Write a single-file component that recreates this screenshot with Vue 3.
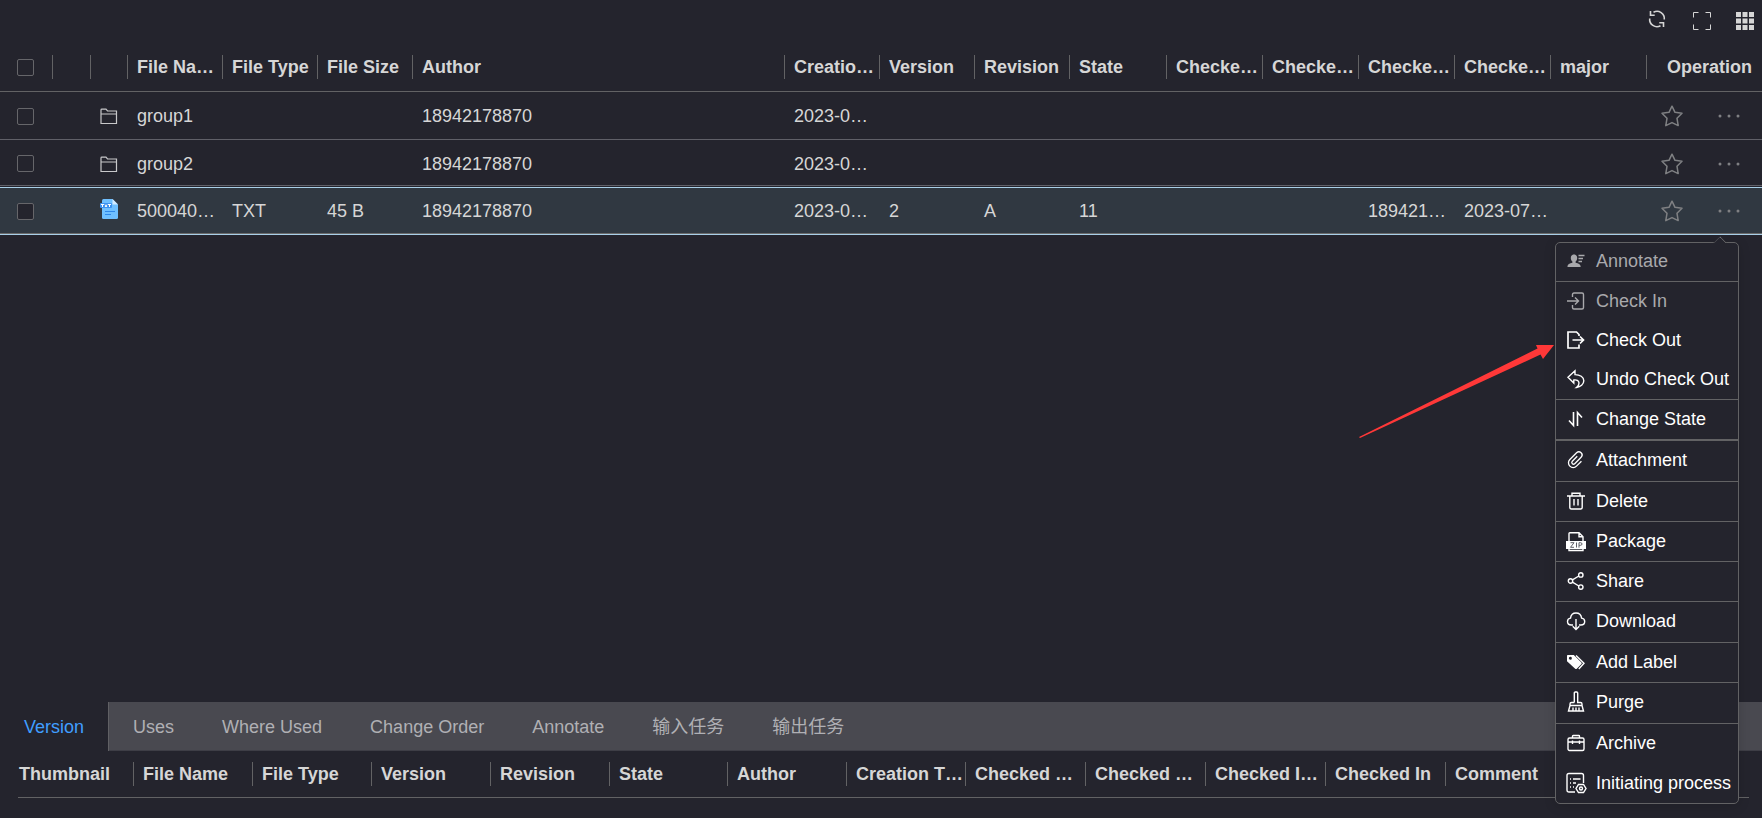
<script setup>
import { ref } from 'vue'

const columns = [
  { key: 'pin', label: '', cls: 'c-pin' },
  { key: 'icon', label: '', cls: 'c-icon' },
  { key: 'name', label: 'File Na…', cls: 'c-95' },
  { key: 'type', label: 'File Type', cls: 'c-95' },
  { key: 'size', label: 'File Size', cls: 'c-95' },
  { key: 'author', label: 'Author', cls: 'c-auto' },
  { key: 'created', label: 'Creatio…', cls: 'c-95' },
  { key: 'version', label: 'Version', cls: 'c-95' },
  { key: 'revision', label: 'Revision', cls: 'c-95' },
  { key: 'state', label: 'State', cls: 'c-97' },
  { key: 'ch1', label: 'Checke…', cls: 'c-96' },
  { key: 'ch2', label: 'Checke…', cls: 'c-96' },
  { key: 'ch3', label: 'Checke…', cls: 'c-96' },
  { key: 'ch4', label: 'Checke…', cls: 'c-96' },
  { key: 'major', label: 'major', cls: 'c-96' },
]

const rows = ref([
  { id: 1, kind: 'folder', name: 'group1', author: '18942178870', created: '2023-0…' },
  { id: 2, kind: 'folder', name: 'group2', author: '18942178870', created: '2023-0…' },
  {
    id: 3, kind: 'txt', selected: true, name: '500040…', type: 'TXT', size: '45 B',
    author: '18942178870', created: '2023-0…', version: '2', revision: 'A', state: '11',
    ch3: '189421…', ch4: '2023-07…',
  },
])

const tabs = ['Version', 'Uses', 'Where Used', 'Change Order', 'Annotate', '输入任务', '输出任务']
const activeTab = ref('Version')

const detailColumns = [
  { label: 'Thumbnail', cls: 'd-116' },
  { label: 'File Name', cls: 'd-119' },
  { label: 'File Type', cls: 'd-119' },
  { label: 'Version', cls: 'd-119' },
  { label: 'Revision', cls: 'd-119' },
  { label: 'State', cls: 'd-118' },
  { label: 'Author', cls: 'd-119' },
  { label: 'Creation T…', cls: 'd-119' },
  { label: 'Checked …', cls: 'd-120' },
  { label: 'Checked …', cls: 'd-120' },
  { label: 'Checked I…', cls: 'd-120' },
  { label: 'Checked In', cls: 'd-120' },
  { label: 'Comment', cls: 'c-auto' },
]

const icons = {
  annotate: '<path fill="currentColor" stroke="none" d="M7 2.5c2 0 3.200 1.400 3.200 3.400 0 1.500-.7 2.900-1.600 3.600v1.300c2.700.6 5 1.600 5 3.400V15H.5v-.8c0-1.800 2.200-2.800 4.900-3.400V9.500C4.500 8.800 3.800 7.400 3.800 5.900c0-2 1.200-3.400 3.200-3.400z"/><path d="M11.500 3.500h6M11.500 6.500h4.500M11.500 9.500h3.500"/>',
  checkin: '<path d="M5.500 5V2.500Q5.500 1 7 1H15Q16.500 1 16.500 2.500V15.500Q16.500 17 15 17H7Q5.500 17 5.500 15.500V13M0 9H11.500M8 5.500L11.500 9L8 12.500"/>',
  checkout: '<path stroke-width="1.700" d="M12 5V3.500L9.500 1H1V17H12V13.500M5.500 9H16.500M13 5.500L16.500 9L13 12.500"/>',
  undo: '<path d="M8 .8L1 7.200L6.800 13V10C9.500 9.500 11.800 10.500 12 13C12.100 15 11 16.300 9.500 17.500C13.500 17.200 16.800 14.300 16.800 10.800C16.800 7 13 4.600 8 4.600Z"/>',
  state: '<path stroke-width="1.600" d="M6.500 2V15.500L2 10.500M10.500 16V2.500L15 7.500"/>',
  attach: '<path stroke-width="1.300" transform="rotate(45 9 9)" d="M13.700 6V13A4.700 4.700 0 0 1 4.300 13V3.500A3.200 3.200 0 0 1 10.700 3.500V12.500A1.700 1.700 0 0 1 7.300 12.500V5.500"/>',
  delete: '<path d="M0 4H18M5 4V1.300H13V4M2.800 4V15.500Q2.800 17 4.300 17H13.700Q15.200 17 15.200 15.500V4M7 7V13.500M11 7V13.500"/>',
  package: '<path d="M2 9V1.500Q2 .7 2.800 .7H12L16 4.700V9M12 .7V4.700H16M2 17V18.500H16V17"/><rect x="-1" y="9" width="20" height="8" fill="currentColor" stroke="none"/><path stroke="#5f6068" stroke-width="1" d="M3.500 10.700H7L3.500 15.300H7M9.500 10.500V15.500M12 15.700V10.700H13.500Q15 10.700 15 12T13.500 13.300H12"/>',
  share: '<circle cx="3.500" cy="9" r="2.200"/><circle cx="13.800" cy="2.900" r="2.200"/><circle cx="13.800" cy="15.100" r="2.200"/><path d="M5.400 7.900L11.900 4M5.400 10.100L11.900 14"/>',
  download: '<path d="M6 13H4.300C2 13 .5 11.500 .5 9.500C.5 7.600 1.800 6.300 3.500 6.100C3.900 3.100 6 1 9 1S14.200 3.100 14.600 6.100C16.300 6.300 17.700 7.600 17.700 9.500C17.700 11.500 16.200 13 13.900 13H12M9 7V17.500M5.700 14.300L9 17.500L12.300 14.300"/>',
  label: '<path fill="currentColor" stroke="none" fill-rule="evenodd" d="M0 2.800Q0 2 .8 2H6.800L14.400 9.400Q15.200 10.200 14.400 11L9.800 15.700Q9 16.400 8.200 15.700L0 8.200ZM3.300 3.700A1.500 1.500 0 1 0 3.400 6.700A1.500 1.500 0 1 0 3.300 3.700Z"/><path d="M9 2.500L17 10.200L11.800 16"/>',
  purge: '<path d="M7.300 9.500V0Q7.300 -1 8.300 -1H9.700Q10.700 -1 10.700 0V9.500H13.500Q15 9.500 15 11V12.500H3V11Q3 9.500 4.500 9.500H7.300M3 12.500L1.500 18H16.500L15 12.500M6 14.500V18M9 14.500V18M12 14.500V18"/>',
  archive: '<rect x="1" y="4" width="16" height="12.500" rx="1.500"/><path d="M5.500 4V2.200Q5.500 1.500 6.200 1.500H11.800Q12.500 1.500 12.500 2.200V4M1 8H17M5.500 6.500V10M12.500 6.500V10"/>',
  process: '<path d="M8 18H2Q0 18 0 16V1.500Q0 -.5 2 -.5H14.500Q16.500 -.5 16.500 1.500V9M6 5H13.500M6 9H9M3 5H4M3 9H4M3 13H4M6 13H7"/><path d="M11.500 10.500H16.500L19 14.500L16.500 18.500H11.500L9 14.500Z"/><circle cx="14" cy="14.500" r="1.500"/>',
}

const menu = [
  { label: 'Annotate', icon: 'annotate', disabled: true, line: true, short: true },
  { label: 'Check In', icon: 'checkin', disabled: true },
  { label: 'Check Out', icon: 'checkout' },
  { label: 'Undo Check Out', icon: 'undo', line: true },
  { label: 'Change State', icon: 'state', thick: true },
  { label: 'Attachment', icon: 'attach', line: true, tall: true },
  { label: 'Delete', icon: 'delete', line: true },
  { label: 'Package', icon: 'package', line: true },
  { label: 'Share', icon: 'share', line: true },
  { label: 'Download', icon: 'download', line: true, tall: true },
  { label: 'Add Label', icon: 'label', line: true },
  { label: 'Purge', icon: 'purge', line: true, tall: true },
  { label: 'Archive', icon: 'archive', tall: true },
  { label: 'Initiating process', icon: 'process' },
]
</script>

<template>
  <div class="page">
    <header class="toolbar">
      <button class="tool" aria-label="Refresh">
        <svg width="18" height="18" viewBox="2 2 18 18" fill="none" stroke="currentColor" stroke-width="1.600">
          <path d="M5.500 2.300A7.300 7.300 0 0 1 16.300 9.500M12.500 15.700A7.300 7.300 0 0 1 1.700 8.500" />
          <path d="M2.500 1V5.200H6.700M15.500 17V12.800H11.300" />
        </svg>
      </button>
      <button class="tool" aria-label="Full screen">
        <svg width="18" height="18" viewBox="0 0 18 18" fill="none" stroke="currentColor">
          <path d="M.5 5.500V.5H5.500M12.500 .5H17.500V5.500M17.500 12.500V17.500H12.500M5.500 17.500H.5V12.500" />
        </svg>
      </button>
      <button class="tool" aria-label="Columns">
        <svg width="18" height="18" viewBox="0 0 18 18" fill="currentColor">
          <template v-for="y in 3" :key="y">
            <rect v-for="x in 3" :key="x" :x="(x - 1) * 6.5" :y="(y - 1) * 6.5" width="5" height="5" />
          </template>
        </svg>
      </button>
    </header>

    <main class="files">
      <table class="grid">
        <colgroup>
          <col class="c-check" />
          <col v-for="c in columns" :key="c.key" :class="c.cls" />
          <col class="c-op" />
        </colgroup>
        <thead>
          <tr>
            <th><div class="head check"><input type="checkbox" aria-label="Select all" /></div></th>
            <th v-for="c in columns" :key="c.key"><div class="head">{{ c.label }}</div></th>
            <th><div class="head op-head">Operation</div></th>
          </tr>
        </thead>
        <tbody>
          <tr v-for="row in rows" :key="row.id" :class="{ selected: row.selected }">
            <td class="check"><input type="checkbox" :aria-label="row.name" /></td>
            <td v-for="c in columns" :key="c.key" :class="{ kind: c.key === 'icon' }">
              <template v-if="c.key === 'icon'">
                <svg v-if="row.kind === 'folder'" width="18" height="20" viewBox="0 0 18 20" fill="none" stroke="#c8c8ca" stroke-width="1.200">
                  <path d="M1 17.500V4Q1 3.200 1.800 3.200H6L7.500 5H16.500V17.500ZM1 8H16.500" />
                </svg>
                <svg v-else width="18" height="20" viewBox="0 0 18 20">
                  <path d="M2 1.500Q2 0 3.500 0H12.500L18 5.500V18.500Q18 20 16.500 20H3.500Q2 20 2 18.500Z" fill="#6fc0ff" />
                  <path d="M12.500 0L18 5.500H12.500Z" fill="#d3ebff" />
                  <rect y="4" width="12" height="5" rx="1" fill="#3d92ef" />
                  <path d="M1 5.500H4M2.500 5.500V8M5 5.500L7 8M7 5.500L5 8M8 5.500H11M9.500 5.500V8" stroke="#fff" />
                  <path d="M5 12.500H15M5 15.500H11" stroke="#2e87e8" />
                </svg>
              </template>
              <template v-else>{{ row[c.key] }}</template>
            </td>
            <td>
              <div class="ops">
                <button class="op" aria-label="Favourite">
                  <svg width="22" height="22" viewBox="0 0 22 22" fill="none" stroke="currentColor" stroke-width="1.500" stroke-linejoin="round">
                    <path d="M11 1.200L14 7.300L21 8.300L16 13.300L17.200 20.600L11 17.600L4.800 20.600L6 13.300L1 8.300L8 7.300Z" />
                  </svg>
                </button>
                <button class="op" aria-label="More">
                  <svg width="22" height="22" viewBox="0 0 22 22" fill="currentColor">
                    <circle cx="2" cy="11" r="1.500" /><circle cx="11" cy="11" r="1.500" /><circle cx="20" cy="11" r="1.500" />
                  </svg>
                </button>
              </div>
            </td>
          </tr>
        </tbody>
      </table>
    </main>

    <section class="details">
      <div class="tabs" role="tablist">
        <button
          v-for="t in tabs" :key="t" role="tab" class="tab"
          :class="{ active: t === activeTab }" :aria-selected="t === activeTab"
          @click="activeTab = t"
        >{{ t }}</button>
      </div>
      <div class="detail-body">
        <table class="grid detail-grid">
          <colgroup>
            <col v-for="(d, i) in detailColumns" :key="i" :class="d.cls" />
          </colgroup>
          <thead>
            <tr>
              <th v-for="(d, i) in detailColumns" :key="i"><div class="head">{{ d.label }}</div></th>
            </tr>
          </thead>
        </table>
      </div>
    </section>

    <nav class="menu" aria-label="File actions">
      <span class="caret"></span>
      <button
        v-for="m in menu" :key="m.label" class="item"
        :class="{ line: m.line, thick: m.thick, tall: m.tall, short: m.short }" :disabled="m.disabled"
      >
        <svg width="18" height="18" viewBox="0 0 18 18" fill="none" stroke="currentColor" stroke-width="1.400" v-html="icons[m.icon]"></svg>
        <span>{{ m.label }}</span>
      </button>
    </nav>

    <svg class="pointer" width="196" height="95" viewBox="0 0 196 95" fill="#ff3838">
      <path d="M0 93L178.500 4.500L177 1H195L184 15L181.500 10.500L1 94Z" />
    </svg>
  </div>
</template>

<style>
body {
  background: #24242d;
}
</style>

<style scoped>
.page {
  position: relative;
  display: flex;
  flex-direction: column;
  min-height: 100vh;
  overflow: hidden;
  background: #24242d;
  color: #d6d6d6;
  font: 18px/24px "Liberation Sans", Arial, "Noto Sans CJK SC", sans-serif;
}
button {
  margin: 0;
  padding: 0;
  border: 0;
  background: none;
  color: inherit;
  font: inherit;
  cursor: pointer;
}
svg {
  display: block;
  flex: none;
  overflow: visible;
}
.toolbar {
  display: flex;
  justify-content: flex-end;
  align-items: flex-start;
  gap: 25px;
  padding: 12px 8px 13px;
}
.files {
  flex: 1;
}
.grid {
  width: 100%;
  table-layout: fixed;
  border-collapse: separate;
  border-spacing: 0;
  white-space: nowrap;
}
.grid th {
  height: 48px;
  padding: 0;
  border-bottom: 1px solid #626264;
  text-align: left;
}
.head {
  height: 24px;
  padding-left: 9px;
  border-right: 1px solid #626264;
}
th:last-child .head {
  border-right: 0;
}
.grid .op-head {
  padding-left: 20px;
}
.grid td {
  box-sizing: border-box;
  height: 48px;
  padding: 0 0 0 9px;
  border-bottom: 1px solid #606068;
}
.grid tr:nth-child(2) td {
  height: 46px;
  padding-top: 2px;
}
.grid .selected td {
  height: 49px;
  border: 0;
  background: #303841;
  box-shadow: inset 0 1px #24242d, inset 0 2px #a9cfe8, inset 0 -1px #a9cfe8, inset 0 -2px #6b6b6b;
}
.grid .check {
  padding-left: 17px;
}
.grid td.check {
  padding-top: 2px;
}
.head.check {
  display: flex;
  align-items: center;
}
input[type="checkbox"] {
  appearance: none;
  display: block;
  box-sizing: border-box;
  width: 17px;
  height: 17px;
  margin: 0;
  border: 1px solid #66666a;
  border-radius: 2px;
  background: #24242d;
}
.c-check { width: 53px; }
.c-pin { width: 38px; }
.c-icon { width: 37px; }
.c-95 { width: 95px; }
.c-96 { width: 96px; }
.c-97 { width: 97px; }
.c-op { width: 115px; }
.d-116 { width: 116px; }
.d-118 { width: 118px; }
.d-119 { width: 119px; }
.d-120 { width: 120px; }
.grid .selected .kind {
  padding-bottom: 3px;
}
.ops {
  display: flex;
  gap: 35px;
  padding-left: 5px;
}
.op {
  color: #7f8083;
}
.tabs {
  display: flex;
  height: 48px;
  background: #494950;
  border-bottom: 1px solid #3e3e46;
}
.tab {
  height: 49px;
  padding: 0 24px;
  color: #b0b0b4;
}
.tab.active {
  background: #24242d;
  border-right: 1px solid #606064;
  color: #409eff;
}
.detail-body {
  padding: 0 13px 20px 18px;
}
.detail-grid th {
  height: 46px;
}
.detail-grid th:first-child .head {
  padding-left: 1px;
}
.menu {
  position: absolute;
  top: 242px;
  right: 23px;
  display: flex;
  flex-direction: column;
  box-sizing: border-box;
  border: 1px solid #626264;
  border-radius: 5px;
  background: #24242d;
  color: #fff;
  box-shadow: 0 2px 12px rgba(0, 0, 0, 0.15);
}
.caret {
  position: absolute;
  top: -5px;
  right: 13px;
  width: 9px;
  height: 9px;
  border-top: 1px solid #4a4a50;
  border-right: 1px solid #707072;
  background: #24242d;
  transform: rotate(-45deg);
  clip-path: polygon(0 0, 100% 0, 100% 100%);
}
.item {
  display: flex;
  align-items: center;
  gap: 11px;
  box-sizing: content-box;
  height: 37px;
  padding: 0 7px 2px 11px;
  text-align: left;
  white-space: nowrap;
}
.item:disabled {
  color: #a9a9ac;
}
.item.short {
  height: 36px;
}
.item.tall {
  height: 38px;
}
.item.line {
  border-bottom: 1px solid #626264;
}
.item.thick {
  border-bottom: 2px solid #626264;
}
.pointer {
  position: absolute;
  top: 344px;
  right: 207px;
  pointer-events: none;
}
</style>
